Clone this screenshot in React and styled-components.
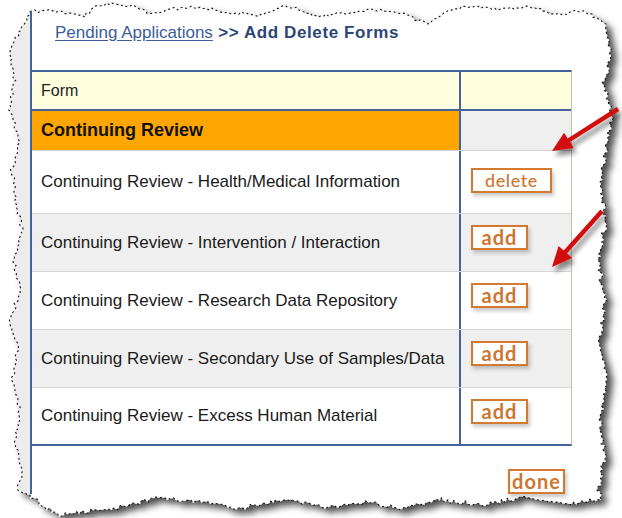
import React from "react";
import styled, { createGlobalStyle } from "styled-components";

const forms = [
  { name: "Continuing Review - Health/Medical Information", action: "delete" },
  { name: "Continuing Review - Intervention / Interaction", action: "add" },
  { name: "Continuing Review - Research Data Repository", action: "add" },
  { name: "Continuing Review - Secondary Use of Samples/Data", action: "add" },
  { name: "Continuing Review - Excess Human Material", action: "add" },
];

// control points of the torn sheet, clockwise from the top-left corner
const edges = {
  top: [
    [30, 12], [48, 10], [70, 14], [84, 16], [96, 7], [112, 3], [132, 6],
    [150, 14], [172, 9], [200, 7], [228, 12], [258, 15], [288, 6], [318, 16],
    [345, 13], [372, 9], [402, 14], [428, 24], [446, 11], [470, 6], [500, 9],
    [530, 6], [556, 15], [584, 10], [606, 24],
  ],
  right: [
    [606, 24], [611, 58], [604, 82], [612, 112], [606, 150], [600, 182],
    [606, 222], [598, 262], [605, 300], [600, 340], [607, 380], [600, 420],
    [605, 458], [598, 490], [601, 500],
  ],
  bottom: [
    [601, 500], [562, 504], [522, 498], [482, 505], [442, 500], [402, 508],
    [362, 502], [322, 507], [282, 500], [242, 508], [202, 503], [156, 498],
    [120, 508], [82, 512], [60, 515], [42, 506], [30, 495],
  ],
  left: [
    [30, 495], [18, 490], [22, 470], [15, 440], [20, 410], [12, 380],
    [18, 350], [10, 320], [20, 290], [14, 260], [22, 230], [16, 200],
    [12, 170], [20, 140], [9, 110], [15, 80], [10, 50], [20, 30], [30, 12],
  ],
};

function seeded(seed) {
  let a = seed;
  return () => {
    a |= 0;
    a = (a + 0x6d2b79f5) | 0;
    let t = Math.imul(a ^ (a >>> 15), 1 | a);
    t = (t + Math.imul(t ^ (t >>> 7), 61 | t)) ^ t;
    return ((t ^ (t >>> 14)) >>> 0) / 4294967296;
  };
}

// break every segment into little steps and shake them sideways
function roughen(points, rnd, amp = 1.6, step = 3) {
  const out = [];
  for (let i = 0; i < points.length - 1; i++) {
    const [x1, y1] = points[i];
    const [x2, y2] = points[i + 1];
    const len = Math.hypot(x2 - x1, y2 - y1);
    const n = Math.max(1, Math.ceil(len / step));
    const px = -(y2 - y1) / len;
    const py = (x2 - x1) / len;
    for (let j = 0; j < n; j++) {
      const t = j / n;
      const k = i === 0 && j === 0 ? 0 : (rnd() * 2 - 1) * amp;
      out.push([x1 + (x2 - x1) * t + px * k, y1 + (y2 - y1) * t + py * k]);
    }
  }
  out.push(points[points.length - 1]);
  return out;
}

const toPath = (pts, close = true) =>
  pts.map((p, i) => `${i ? "L" : "M"}${p[0].toFixed(1)} ${p[1].toFixed(1)}`).join(" ") +
  (close ? " Z" : "");

function buildSheet() {
  const rnd = seeded(7);
  const top = roughen(edges.top, rnd);
  const right = roughen(edges.right, rnd, 2.2);
  const bottom = roughen(edges.bottom, rnd, 2.2);
  const left = roughen(edges.left, rnd);
  return {
    outline: toPath([...top, ...right, ...bottom, ...left]),
    strip: toPath(left),
  };
}

function arrowPoints(tail, tip, head = 20, half = 9, shaft = 2.2) {
  const dx = tip[0] - tail[0];
  const dy = tip[1] - tail[1];
  const len = Math.hypot(dx, dy);
  const ux = dx / len;
  const uy = dy / len;
  const px = -uy;
  const py = ux;
  const bx = tip[0] - ux * head;
  const by = tip[1] - uy * head;
  return [
    [tail[0] + px * shaft, tail[1] + py * shaft],
    [bx + px * shaft, by + py * shaft],
    [bx + px * half, by + py * half],
    tip,
    [bx - px * half, by - py * half],
    [bx - px * shaft, by - py * shaft],
    [tail[0] - px * shaft, tail[1] - py * shaft],
  ]
    .map((p) => p.map((v) => v.toFixed(1)).join(","))
    .join(" ");
}

function TornPaper() {
  const { outline, strip } = React.useMemo(buildSheet, []);
  return (
    <PaperArt width="622" height="518" viewBox="0 0 622 518">
      <defs>
        <filter id="paperShadow" x="-10%" y="-10%" width="130%" height="130%">
          <feDropShadow dx="6" dy="5" stdDeviation="3.5" floodColor="#000" floodOpacity="0.7" />
        </filter>
      </defs>
      <path d={outline} fill="#fff" filter="url(#paperShadow)" />
      <path d={strip} fill="#ececec" />
      <path d={outline} fill="none" stroke="#111" strokeWidth="1.1" strokeDasharray="2 2.8" />
    </PaperArt>
  );
}

function Pointers() {
  return (
    <PointerArt width="622" height="518" viewBox="0 0 622 518">
      <defs>
        <filter id="arrowShadow" x="-30%" y="-30%" width="160%" height="160%">
          <feDropShadow dx="3" dy="5" stdDeviation="2.5" floodColor="#000" floodOpacity="0.45" />
        </filter>
      </defs>
      <g fill="#d20f0f" filter="url(#arrowShadow)">
        <polygon points={arrowPoints([618, 109], [552, 151])} />
        <polygon points={arrowPoints([602, 211], [552, 267])} />
      </g>
    </PointerArt>
  );
}

export default function App() {
  return (
    <>
      <GlobalStyle />
      <Canvas>
        <TornPaper />
        <Sheet>
          <Crumbs>
            <CrumbLink href="#">Pending Applications</CrumbLink>
            <CrumbCurrent> &gt;&gt; Add Delete Forms</CrumbCurrent>
          </Crumbs>

          <FormTable>
            <HeaderRow>
              <FormCell>Form</FormCell>
              <ActionCell />
            </HeaderRow>
            <CategoryRow>
              <FormCell>Continuing Review</FormCell>
              <ActionCell />
            </CategoryRow>
            {forms.map((form, i) => (
              <ItemRow
                key={form.name}
                $shaded={i % 2 === 1}
                $first={i === 0}
                $last={i === forms.length - 1}
              >
                <FormCell>{form.name}</FormCell>
                <ActionCell $first={i === 0}>
                  <ActionButton $wide={form.action === "delete"}>
                    {form.action}
                  </ActionButton>
                </ActionCell>
              </ItemRow>
            ))}
          </FormTable>

          <Footer>
            <ActionButton>done</ActionButton>
          </Footer>
        </Sheet>
        <Pointers />
      </Canvas>
    </>
  );
}

const GlobalStyle = createGlobalStyle`
  html, body {
    margin: 0;
    padding: 0;
    background: #fff;
  }
  body {
    font-family: "Liberation Sans", Arial, sans-serif;
  }
`;

const Canvas = styled.div`
  position: relative;
  width: 622px;
  height: 518px;
  overflow: hidden;
  box-sizing: border-box;
  padding: 12px 0 0 30px;
  background: #fff;
`;

const PaperArt = styled.svg`
  position: absolute;
  left: 0;
  top: 0;
`;

const PointerArt = styled.svg`
  position: absolute;
  left: 0;
  top: 0;
  pointer-events: none;
`;

const Sheet = styled.div`
  position: relative;
  display: flex;
  flex-direction: column;
  width: 541px;
  height: 482px;
  box-sizing: border-box;
  border-left: 2px solid #44639a;
`;

const Crumbs = styled.div`
  height: 58px;
  box-sizing: border-box;
  padding: 11px 0 0 23px;
  font-size: 17px;
  line-height: 20px;
  white-space: nowrap;
`;

const CrumbLink = styled.a`
  color: #3d5c9c;
  text-decoration: underline;
  text-underline-offset: 2px;
`;

const CrumbCurrent = styled.span`
  color: #2c4676;
  font-weight: bold;
  letter-spacing: 0.6px;
`;

const FormTable = styled.div`
  display: flex;
  flex-direction: column;
  width: 539px;
  border-top: 2px solid #44639a;
  border-bottom: 2px solid #44639a;
  border-right: 1px solid #c4bdb0;
`;

const Row = styled.div`
  display: grid;
  grid-template-columns: 427px 1fr;
`;

const FormCell = styled.div`
  display: flex;
  align-items: center;
  padding-left: 9px;
  font-size: 17px;
  color: #1a1a1a;
  white-space: nowrap;
`;

const ActionCell = styled.div`
  display: flex;
  align-items: flex-start;
  padding: ${(p) => (p.$first ? "17px" : "11px")} 0 0 10px;
  border-left: 2px solid #44639a;
`;

const HeaderRow = styled(Row)`
  height: 39px;
  box-sizing: border-box;
  border-bottom: 2px solid #44639a;
  background: #ffffe0;

  ${FormCell} {
    font-size: 16px;
    color: #222;
  }
`;

const CategoryRow = styled(Row)`
  height: 40px;
  box-sizing: border-box;
  border-bottom: 1px solid #d2d2d2;

  ${FormCell} {
    background: #ffa500;
    font-size: 18px;
    font-weight: bold;
    color: #111;
  }
  ${ActionCell} {
    background: #efefef;
  }
`;

const ItemRow = styled(Row)`
  height: ${(p) => (p.$first ? 63 : p.$last ? 56 : 58)}px;
  box-sizing: border-box;
  border-bottom: ${(p) => (p.$last ? "none" : "1px solid #d6d6d6")};
  background: ${(p) => (p.$shaded ? "#efefef" : "#fff")};
`;

const ActionButton = styled.button`
  display: inline-flex;
  align-items: center;
  justify-content: center;
  width: ${(p) => (p.$wide ? 81 : 57)}px;
  height: 25px;
  box-sizing: border-box;
  padding: 0 0 2px;
  border: 2px solid #d37a30;
  background: #fff;
  box-shadow: 2px 3px 4px rgba(0, 0, 0, 0.22);
  font-family: Lato, "Open Sans", sans-serif;
  font-size: ${(p) => (p.$wide ? 18 : 20)}px;
  font-weight: ${(p) => (p.$wide ? 500 : 700)};
  letter-spacing: ${(p) => (p.$wide ? 0.6 : 1)}px;
  color: #cd7630;
  cursor: pointer;
`;

const Footer = styled.div`
  display: flex;
  justify-content: flex-end;
  padding: 23px 6px 0 0;
`;
